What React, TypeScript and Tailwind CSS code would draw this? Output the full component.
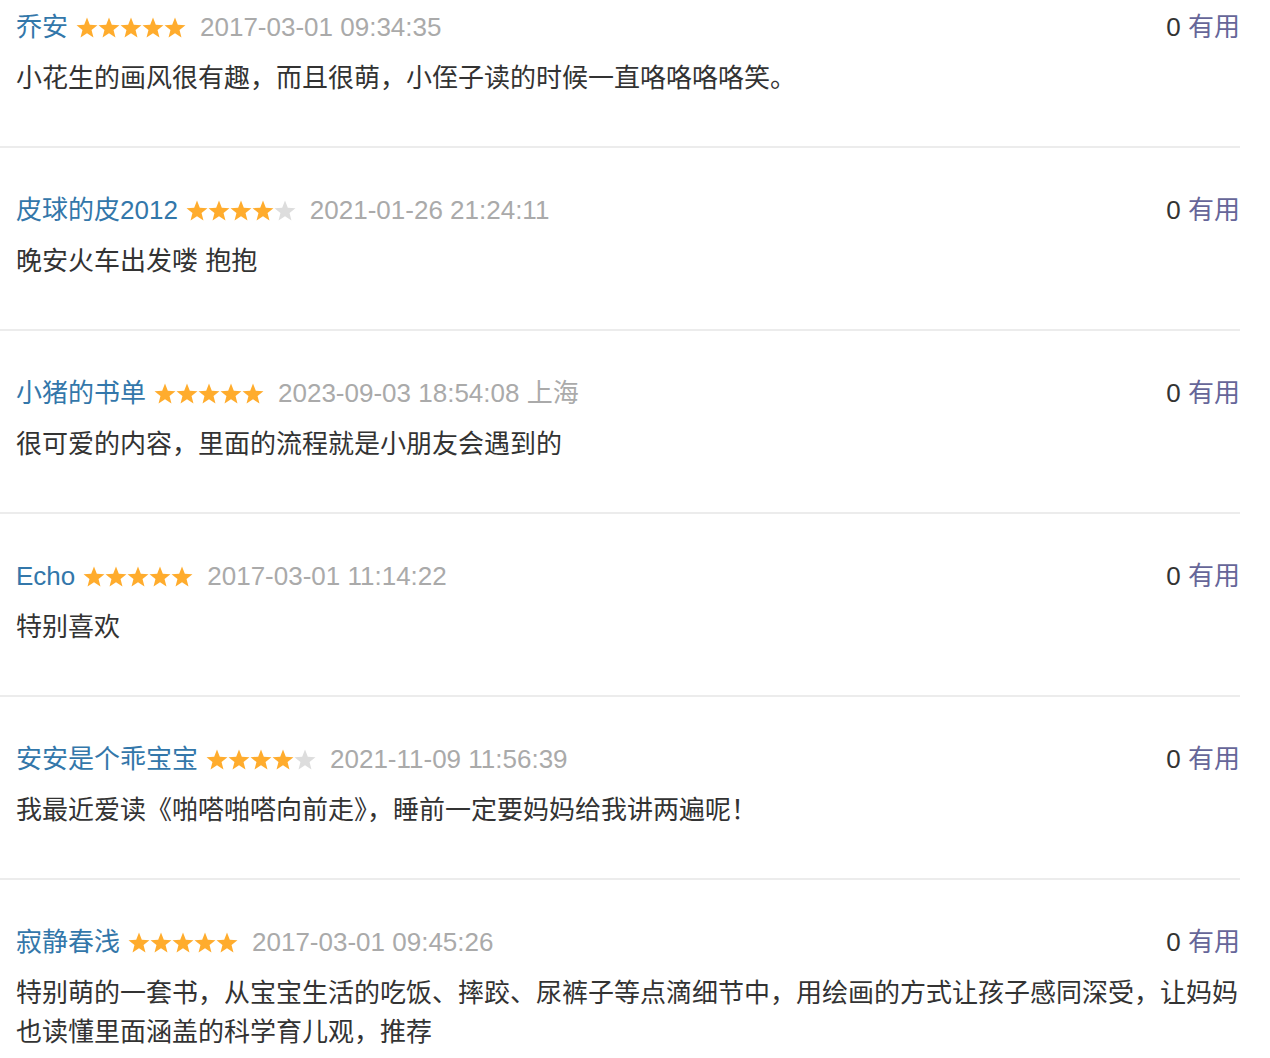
import React from 'react';

type Review = {
  name: string;
  stars: number;
  time: string;
  text: string;
};

const reviews: Review[] = [
  { name: '乔安', stars: 5, time: '2017-03-01 09:34:35', text: '小花生的画风很有趣，而且很萌，小侄子读的时候一直咯咯咯咯笑。' },
  { name: '皮球的皮2012', stars: 4, time: '2021-01-26 21:24:11', text: '晚安火车出发喽 抱抱' },
  { name: '小猪的书单', stars: 5, time: '2023-09-03 18:54:08 上海', text: '很可爱的内容，里面的流程就是小朋友会遇到的' },
  { name: 'Echo', stars: 5, time: '2017-03-01 11:14:22', text: '特别喜欢' },
  { name: '安安是个乖宝宝', stars: 4, time: '2021-11-09 11:56:39', text: '我最近爱读《啪嗒啪嗒向前走》，睡前一定要妈妈给我讲两遍呢！' },
  { name: '寂静春浅', stars: 5, time: '2017-03-01 09:45:26', text: '特别萌的一套书，从宝宝生活的吃饭、摔跤、尿裤子等点滴细节中，用绘画的方式让孩子感同深受，让妈妈也读懂里面涵盖的科学育儿观，推荐' },
];

const Star = ({ on }: { on: boolean }) => (
  <svg width="22" height="22" viewBox="0 0 24 24" className="shrink-0">
    <polygon
      points="12,0.6 15.06,8.39 23.41,8.89 16.95,14.21 19.05,22.31 12,17.8 4.95,22.31 7.05,14.21 0.59,8.89 8.94,8.39"
      fill={on ? '#ffac2d' : '#dddddd'}
    />
  </svg>
);

const Stars = ({ count }: { count: number }) => (
  <span className="flex items-center mr-[14px]">
    {[0, 1, 2, 3, 4].map((i) => (
      <Star key={i} on={i < count} />
    ))}
  </span>
);

const ReviewItem = ({ review }: { review: Review }) => (
  <div className="pl-[16px] pt-[43px] pb-[48px] border-b-2 border-[#ececec]">
    <div className="flex items-center h-[39px]">
      <span className="text-[#3377aa] mr-[8px]">{review.name}</span>
      <Stars count={review.stars} />
      <span className="text-[#aaaaaa]">{review.time}</span>
      <span className="ml-auto">
        <span className="text-[#333333]">0</span> <span className="text-[#666699]">有用</span>
      </span>
    </div>
    <p className="mt-[12px] text-[#333333] leading-[39px]">{review.text}</p>
  </div>
);

export default function App() {
  return (
    <div
      className="w-[1270px] h-[1058px] overflow-hidden bg-white text-[26px] leading-[39px]"
      style={{ fontFamily: '"Liberation Sans", "Noto Sans CJK SC", sans-serif' }}
    >
      <div className="w-[1240px] -mt-[35px]">
        {reviews.map((r) => (
          <ReviewItem key={r.name} review={r} />
        ))}
      </div>
    </div>
  );
}
